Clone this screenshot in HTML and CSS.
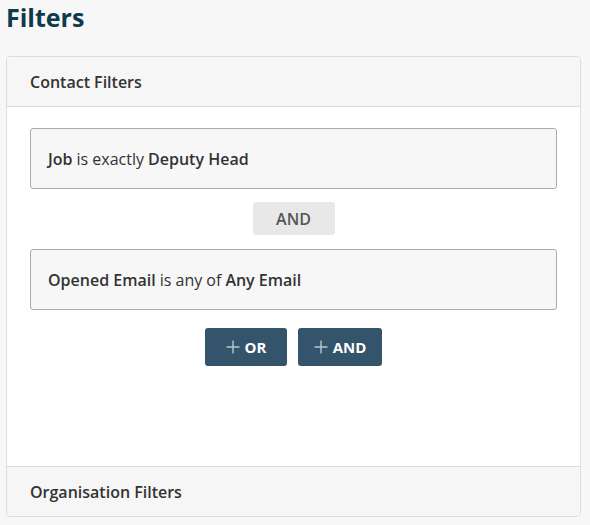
FILE: index.html
```html
<!DOCTYPE html>
<html>
<head>
<meta charset="utf-8">
<link rel="stylesheet" href="styles.css">
</head>
<body>
<h1 class="title">Filters</h1>
<div class="card">
  <div class="card-header">Contact Filters</div>
  <div class="card-body">
    <div class="rule"><b>Job</b> is exactly <b>Deputy Head</b></div>
    <div class="joiner">AND</div>
    <div class="rule"><b>Opened Email</b> is any of <b>Any Email</b></div>
    <div class="actions">
      <button class="btn btn-or"><svg class="plus" width="14" height="14" viewBox="0 0 14 14"><path d="M7 0.5V13.5M0.5 7H13.5" stroke="currentColor" stroke-width="1.4" fill="none"/></svg>OR</button>
      <button class="btn btn-and"><svg class="plus" width="14" height="14" viewBox="0 0 14 14"><path d="M7 0.5V13.5M0.5 7H13.5" stroke="currentColor" stroke-width="1.4" fill="none"/></svg>AND</button>
    </div>
  </div>
  <div class="card-footer">Organisation Filters</div>
</div>
</body>
</html>
```
FILE: styles.css
```css
html, body {
  margin: 0;
  padding: 0;
  background: #f7f7f7;
}
body {
  font-family: "Open Sans", "Noto Sans", sans-serif;
  color: #333;
  padding: 0 9px 0 6px;
}
.title {
  margin: 0;
  padding-top: 1px;
  font-size: 25px;
  line-height: 33px;
  font-weight: 700;
  color: #0e3a4e;
}
.card {
  margin-top: 22px;
  border: 1px solid #dcdcdc;
  border-radius: 4px;
  background: #fff;
  overflow: hidden;
}
.card-header, .card-footer {
  height: 49px;
  background: #f6f6f6;
  font-size: 16px;
  font-weight: 600;
  color: #333;
  display: flex;
  align-items: center;
  padding-left: 23px;
}
.card-header {
  border-bottom: 1px solid #dcdcdc;
}
.card-footer {
  border-top: 1px solid #dcdcdc;
}
.card-body {
  box-sizing: border-box;
  height: 359px;
  padding: 21px 23px 0 23px;
  display: flex;
  flex-direction: column;
  align-items: center;
}
.rule {
  align-self: stretch;
  height: 59px;
  border: 1px solid #ababab;
  border-radius: 3px;
  background: #f7f7f7;
  display: flex;
  align-items: center;
  padding-left: 17px;
  font-size: 16px;
  color: #333;
}
.rule b {
  font-weight: 600;
  white-space: pre;
}
.rule b:first-child { margin-right: 4px; }
.rule b:last-child { margin-left: 4px; }
.joiner {
  margin: 13px 0 14px;
  width: 82px;
  height: 33px;
  border-radius: 3px;
  background: #e8e8e8;
  color: #555;
  font-size: 16px;
  font-weight: 600;
  display: flex;
  align-items: center;
  justify-content: center;
}
.actions {
  margin-top: 18px;
  display: flex;
  gap: 11px;
}
.btn {
  height: 38px;
  border: none;
  border-radius: 3px;
  background: #33546b;
  color: #fff;
  font-family: "Open Sans", "Noto Sans", sans-serif;
  font-size: 15px;
  font-weight: 700;
  display: flex;
  align-items: center;
  justify-content: center;
  padding: 0;
}
.btn-or { width: 82px; }
.btn-and { width: 84px; }
.plus {
  color: #b9c6cf;
  margin-right: 5px;
  flex: none;
}
```
